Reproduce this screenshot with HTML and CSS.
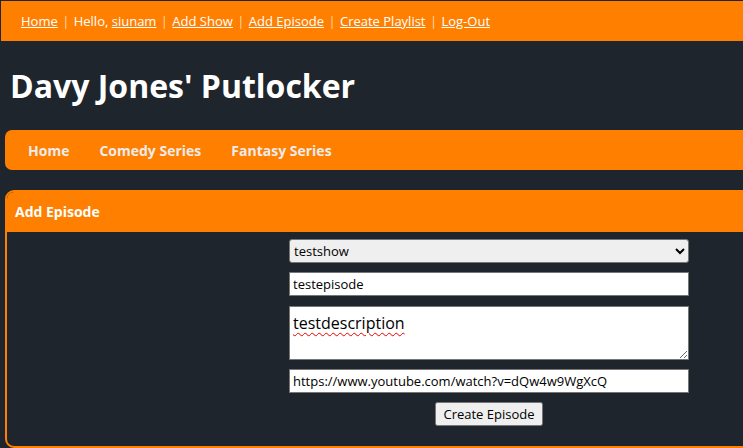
FILE: index.html
```html
<!DOCTYPE html>
<html>
<head>
<meta charset="utf-8">
<link rel="stylesheet" href="styles.css">
</head>
<body>
<div class="topbar">
  <a href="#">Home</a><span class="sep">|</span>Hello,&nbsp;<a href="#">siunam</a><span class="sep">|</span><a href="#">Add Show</a><span class="sep">|</span><a href="#">Add Episode</a><span class="sep">|</span><a href="#">Create Playlist</a><span class="sep">|</span><a href="#">Log-Out</a>
</div>
<h1 class="title">Davy Jones' Putlocker</h1>
<nav class="nav">
  <a href="#">Home</a>
  <a href="#">Comedy Series</a>
  <a href="#">Fantasy Series</a>
</nav>
<section class="panel">
  <div class="panel-head">Add Episode</div>
  <form class="form">
    <select class="field select"><option>testshow</option></select>
    <input class="field input" type="text" value="testepisode">
    <textarea class="field textarea">testdescription</textarea>
    <input class="field input" type="text" value="https://www.youtube.com/watch?v=dQw4w9WgXcQ">
    <button class="btn" type="button">Create Episode</button>
  </form>
</section>
</body>
</html>
```
FILE: styles.css
```css
html, body {
  margin: 0;
  background: #1f252d;
  overflow: hidden;
}
body {
  padding: 1px 0 0 1px;
  font-family: "Open Sans", sans-serif;
  width: 990px;
}
.topbar {
  height: 40px;
  background: #ff7f00;
  display: flex;
  align-items: center;
  padding-left: 20px;
  font-size: 13px;
  color: #fff;
}
.topbar a {
  color: #fff;
  text-decoration: underline;
}
.sep {
  color: #ffd9b0;
  margin: 0 4.4px;
}
.title {
  margin: 22px 0 0 0;
  padding-left: 9px;
  font-size: 32px;
  font-weight: 700;
  color: #fff;
  line-height: 46px;
}
.nav {
  margin: 21px 0 0 4px;
  height: 40px;
  width: 976px;
  background: #ff7f00;
  border-radius: 7px;
  display: flex;
  align-items: center;
  gap: 30px;
  padding-left: 23px;
  box-sizing: border-box;
}
.nav a {
  color: #ececec;
  font-weight: 700;
  font-size: 14px;
  text-decoration: none;
}
.panel {
  margin: 20px 0 0 4px;
  width: 968px;
  border: 2px solid #ff7f00;
  border-radius: 9px;
  box-sizing: border-box;
  overflow: hidden;
}
.panel-head {
  background: #ff7f00;
  height: 40px;
  display: flex;
  align-items: center;
  padding-left: 8px;
  padding-bottom: 2px;
  box-sizing: border-box;
  color: #fff;
  font-weight: 700;
  font-size: 14px;
}
.form {
  display: flex;
  flex-direction: column;
  align-items: center;
  gap: 9px;
  padding: 7px 0 20px;
}
.field {
  width: 400px;
  box-sizing: border-box;
  font-family: "Open Sans", sans-serif;
  margin: 0;
}
.select {
  height: 24px;
  font-size: 13px;
  border-radius: 3px;
}
.input {
  height: 24px;
  font-size: 13px;
  border: 1px solid #767676;
  padding: 1px 3px;
  background: #fff;
  color: #000;
}
.textarea {
  height: 54px;
  font-size: 16px;
  border: 1px solid #767676;
  padding: 5px 3px 2px;
  resize: vertical;
  text-decoration: underline wavy #e00;
  text-decoration-thickness: 1px;
  text-underline-offset: 3px;
  margin-top: 1px;
}
.btn {
  height: 24px;
  font-family: "Open Sans", sans-serif;
  font-size: 13px;
  padding: 0 6px;
}
```
